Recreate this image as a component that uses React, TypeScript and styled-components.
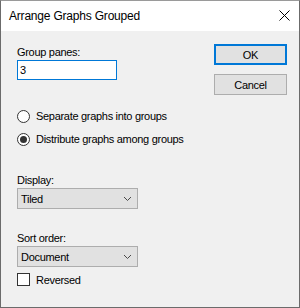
import styled, { createGlobalStyle } from "styled-components";

const GlobalStyle = createGlobalStyle`
  body {
    margin: 0;
    background: #ffffff;
    font-family: "Liberation Sans", Arial, sans-serif;
    font-size: 11px;
    letter-spacing: -0.3px;
    color: #000000;
  }
`;

const Chevron = () => (
  <svg width="9" height="6" viewBox="0 0 9 6">
    <path d="M1 1 L4.5 4.5 L8 1" fill="none" stroke="#4a4a4a" strokeWidth="1" />
  </svg>
);

const CloseIcon = () => (
  <svg width="11" height="11" viewBox="0 0 11 11">
    <path d="M0.5 0.5 L10.5 10.5 M10.5 0.5 L0.5 10.5" stroke="#000" strokeWidth="1" />
  </svg>
);

const App = () => {
  return (
    <>
      <GlobalStyle />
      <Window>
        <TitleBar>
          <Title>Arrange Graphs Grouped</Title>
          <CloseButton>
            <CloseIcon />
          </CloseButton>
        </TitleBar>
        <Body>
          <LeftColumn>
            <Label>Group panes:</Label>
            <TextBox defaultValue="3" />

            <RadioRow $top={28}>
              <Radio />
              <span>Separate graphs into groups</span>
            </RadioRow>
            <RadioRow $top={7}>
              <Radio $checked />
              <span>Distribute graphs among groups</span>
            </RadioRow>

            <Label $top={25}>Display:</Label>
            <Select>
              <span>Tiled</span>
              <Chevron />
            </Select>

            <Label $top={21}>Sort order:</Label>
            <Select>
              <span>Document</span>
              <Chevron />
            </Select>

            <CheckRow>
              <CheckBox />
              <span>Reversed</span>
            </CheckRow>
          </LeftColumn>
          <RightColumn>
            <Button $primary>OK</Button>
            <Button>Cancel</Button>
          </RightColumn>
        </Body>
      </Window>
    </>
  );
};

const Window = styled.div`
  width: 300px;
  height: 308px;
  box-sizing: border-box;
  border: 1px solid #6b6b6b;
  border-top-color: #9a9a9a;
  background: #f0f0f0;
  display: flex;
  flex-direction: column;
`;

const TitleBar = styled.div`
  height: 30px;
  background: #ffffff;
  display: flex;
  align-items: center;
  justify-content: space-between;
  padding: 0 9px 0 8px;
`;

const Title = styled.div`
  font-size: 12px;
  letter-spacing: -0.2px;
  color: #000000;
`;

const CloseButton = styled.div`
  display: flex;
  align-items: center;
  margin-top: -1px;
`;

const Body = styled.div`
  flex: 1;
  display: flex;
  justify-content: space-between;
  padding: 13px 12px 0 16px;
`;

const LeftColumn = styled.div`
  display: flex;
  flex-direction: column;
`;

const RightColumn = styled.div`
  display: flex;
  flex-direction: column;
  gap: 9px;
`;

const Label = styled.div<{ $top?: number }>`
  height: 16px;
  line-height: 16px;
  margin-top: ${(p) => p.$top ?? 0}px;
`;

const TextBox = styled.input`
  width: 100px;
  height: 20px;
  box-sizing: border-box;
  border: 1px solid #0078d7;
  background: #ffffff;
  padding: 0 2px;
  font-family: inherit;
  font-size: 11px;
  letter-spacing: inherit;
  outline: none;
`;

const RadioRow = styled.label<{ $top: number }>`
  display: flex;
  align-items: center;
  gap: 6px;
  height: 16px;
  margin-top: ${(p) => p.$top}px;
`;

const Radio = styled.span<{ $checked?: boolean }>`
  width: 13px;
  height: 13px;
  box-sizing: border-box;
  border: 1px solid #333333;
  border-radius: 50%;
  background: #ffffff;
  display: flex;
  align-items: center;
  justify-content: center;
  &::after {
    content: "";
    width: 7px;
    height: 7px;
    border-radius: 50%;
    background: ${(p) => (p.$checked ? "#333333" : "transparent")};
  }
`;

const Select = styled.div`
  width: 121px;
  height: 21px;
  box-sizing: border-box;
  border: 1px solid #adadad;
  background: #e1e1e1;
  display: flex;
  align-items: center;
  justify-content: space-between;
  padding: 0 5px 0 3px;
`;

const CheckRow = styled.label`
  display: flex;
  align-items: center;
  gap: 6px;
  height: 15px;
  margin-top: 5px;
`;

const CheckBox = styled.span`
  width: 13px;
  height: 13px;
  box-sizing: border-box;
  border: 1px solid #333333;
  background: #ffffff;
`;

const Button = styled.button<{ $primary?: boolean }>`
  width: 73px;
  height: 21px;
  box-sizing: border-box;
  background: #e1e1e1;
  border: ${(p) => (p.$primary ? "2px solid #0078d7" : "1px solid #adadad")};
  font-family: inherit;
  font-size: 11px;
  letter-spacing: inherit;
  color: #000000;
  padding: 0;
`;

export default App;
